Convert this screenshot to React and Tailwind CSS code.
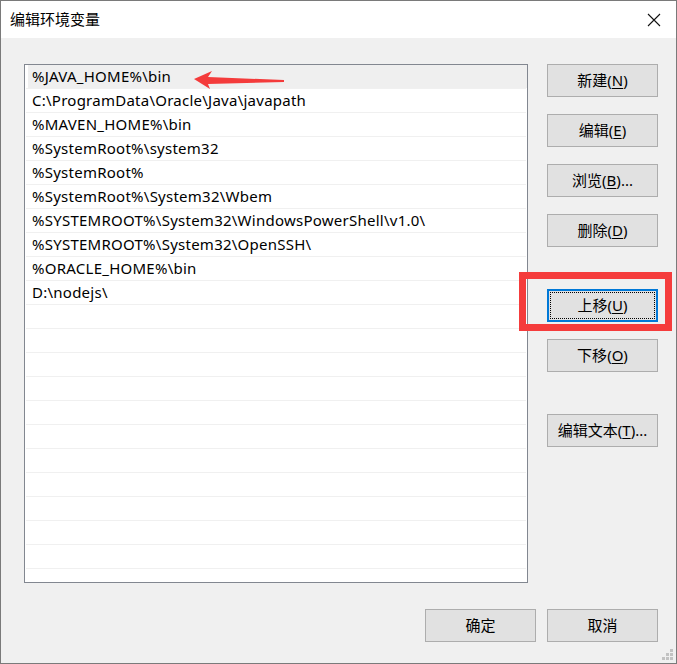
import React from 'react';

const paths = [
  '%JAVA_HOME%\\bin',
  'C:\\ProgramData\\Oracle\\Java\\javapath',
  '%MAVEN_HOME%\\bin',
  '%SystemRoot%\\system32',
  '%SystemRoot%',
  '%SystemRoot%\\System32\\Wbem',
  '%SYSTEMROOT%\\System32\\WindowsPowerShell\\v1.0\\',
  '%SYSTEMROOT%\\System32\\OpenSSH\\',
  '%ORACLE_HOME%\\bin',
  'D:\\nodejs\\',
];

// pad the list with empty rows so the grid lines run to the bottom
const rows = [...paths, ...Array(12).fill('')];

const Btn = ({ label, hot, tail = '', focused, className = '' }) => (
  <button
    className={
      'w-[111px] h-[33px] flex items-center justify-center text-[15px] text-black ' +
      (focused ? 'border-2 border-[#0078d7] bg-[#e1e1e1] p-[1px] ' : 'border border-[#adadad] bg-[#e1e1e1] ') +
      className
    }
  >
    {focused ? (
      <span className="w-full h-full flex items-center justify-center border border-dotted border-black">
        {label}(<span className="underline underline-offset-2">{hot}</span>){tail}
      </span>
    ) : (
      <span>
        {label}
        {hot && (
          <>
            (<span className="underline underline-offset-2">{hot}</span>){tail}
          </>
        )}
      </span>
    )}
  </button>
);

export default function App() {
  return (
    <div
      className="relative w-[677px] h-[664px] border border-[#7a7a7a] bg-[#f0f0f0] flex flex-col overflow-hidden"
      style={{ fontFamily: '"Noto Sans", "Noto Sans CJK SC", sans-serif' }}
    >
      {/* title bar */}
      <div className="h-[37px] bg-white flex items-center justify-between pl-[9px] pr-[15px] shrink-0">
        <span className="text-[15px] text-black">编辑环境变量</span>
        <svg width="14" height="14" viewBox="0 0 14 14">
          <path d="M1 1 L13 13 M13 1 L1 13" stroke="#111" strokeWidth="1.1" fill="none" />
        </svg>
      </div>

      {/* body */}
      <div className="flex pt-[26px] pl-[23px]">
        <div className="w-[504px] h-[519px] border border-[#828790] bg-white overflow-hidden">
          {rows.map((p, i) => (
            <div key={i} className="h-[24px] flex flex-col">
              <div
                className={
                  'h-[23px] flex items-center text-[15px] tracking-[0.25px] text-black whitespace-nowrap ' +
                  (i === 0 ? 'ml-[3px] pl-[4px] bg-[#efefef]' : 'pl-[7px]')
                }
              >
                {p}
              </div>
              <div className="h-px mx-[1px] bg-[#f0f0f0]" />
            </div>
          ))}
        </div>

        <div className="ml-[19px] flex flex-col">
          <Btn label="新建" hot="N" />
          <Btn label="编辑" hot="E" className="mt-[17px]" />
          <Btn label="浏览" hot="B" tail="..." className="mt-[17px]" />
          <Btn label="删除" hot="D" className="mt-[17px]" />
          <Btn label="上移" hot="U" focused className="mt-[42px]" />
          <Btn label="下移" hot="O" className="mt-[17px]" />
          <Btn label="编辑文本" hot="T" tail="..." className="mt-[42px]" />
        </div>
      </div>

      <div className="flex justify-end gap-[11px] pr-[18px] mt-[26px]">
        <Btn label="确定" />
        <Btn label="取消" />
      </div>

      {/* annotation: red arrow */}
      <svg className="absolute left-[189px] top-[67px]" width="100" height="24" viewBox="0 0 100 24">
        <polygon points="4,11 22,3 18,9 94,12 94,14 18,16 20,21" fill="#f43b3b" />
      </svg>

      {/* annotation: red box */}
      <div className="absolute left-[518px] top-[271px] w-[153px] h-[59px] border-[7px] border-[#f53c3c]" />

      {/* resize grip */}
      <svg className="absolute right-[3px] bottom-[3px]" width="12" height="12" viewBox="0 0 12 12">
        <rect x="9" y="1" width="3" height="3" fill="#c2c2c2" />
        <rect x="5" y="5" width="3" height="3" fill="#c2c2c2" />
        <rect x="9" y="5" width="3" height="3" fill="#c2c2c2" />
        <rect x="1" y="9" width="3" height="3" fill="#c2c2c2" />
        <rect x="5" y="9" width="3" height="3" fill="#c2c2c2" />
        <rect x="9" y="9" width="3" height="3" fill="#c2c2c2" />
      </svg>
    </div>
  );
}
